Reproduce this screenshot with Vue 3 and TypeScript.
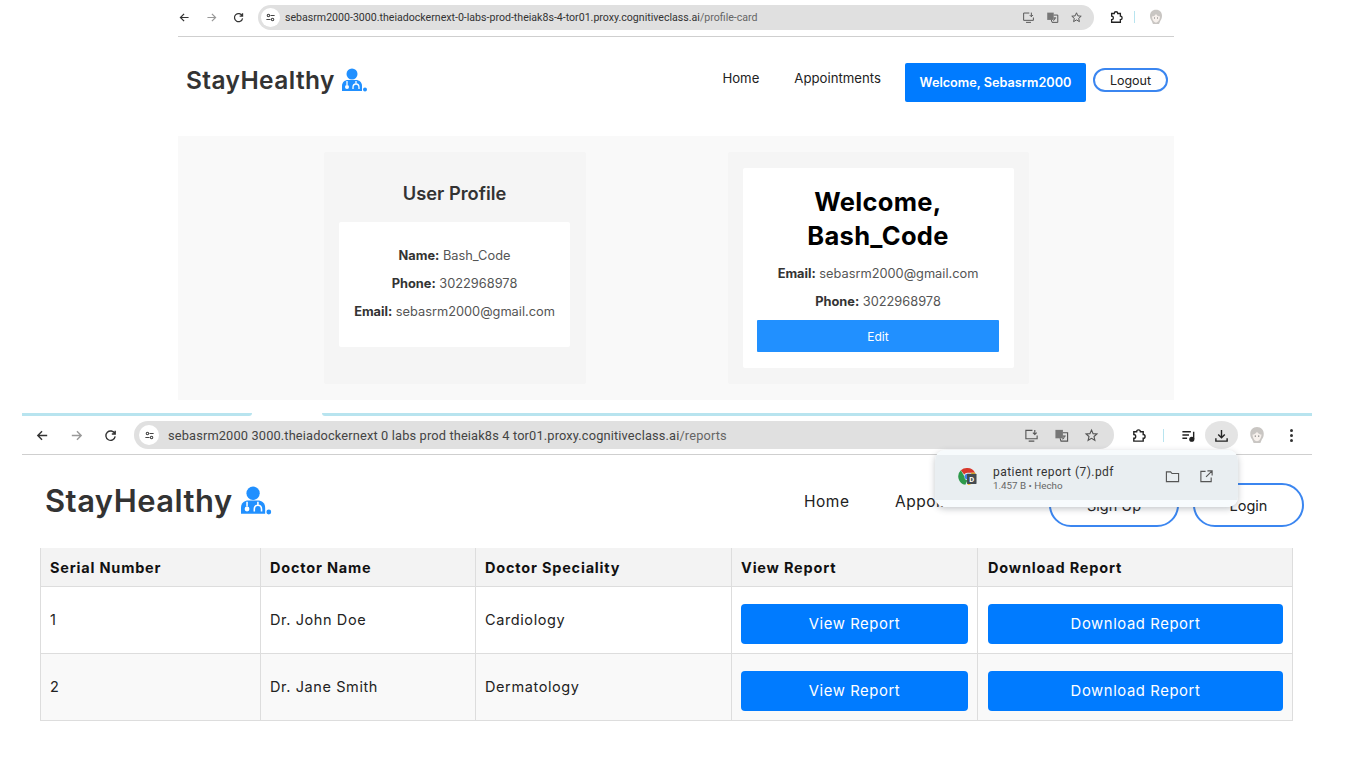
<script setup lang="ts">
const rows = [
  { id: 1, name: 'Dr. John Doe', spec: 'Cardiology' },
  { id: 2, name: 'Dr. Jane Smith', spec: 'Dermatology' },
]
const heads = ['Serial Number', 'Doctor Name', 'Doctor Speciality', 'View Report', 'Download Report']
</script>

<template>
  <div class="page">
    <section class="shot shot-top">
      <header class="chrome">
        <svg class="ic" viewBox="0 0 16 16"><path d="M13 8H3.500M7.500 3.500 3 8l4.500 4.500" /></svg>
        <svg class="ic off" viewBox="0 0 16 16"><path d="M3 8h9.500M8.500 3.500 13 8l-4.500 4.500" /></svg>
        <svg class="ic" viewBox="0 0 16 16"><path d="M12.600 6A5 5 0 1 0 13 9M13 2.800V6.400H9.400" /></svg>
        <div class="pill">
          <span class="tune">
            <svg viewBox="0 0 16 16"><circle cx="5" cy="5" r="1.800" /><path d="M8 5h6M2 11h6" /><circle cx="11" cy="11" r="1.800" /></svg>
          </span>
          <span class="url">sebasrm2000-3000.theiadockernext-0-labs-prod-theiak8s-4-tor01.proxy.cognitiveclass.ai<i>/profile-card</i></span>
          <svg class="ic sm" viewBox="0 0 16 16"><path d="M9 2.500H2v9h12V8M5 14h6M11.500 2v5M9.500 5l2 2 2-2" /></svg>
          <svg class="ic sm tr" viewBox="0 0 16 16"><rect x="1.500" y="2" width="8" height="9" fill="#777" stroke="none" /><path d="M9.500 5h5v9h-7l-1-3" /><path d="M9.500 8.500h3M11 8.500c0 2-1 3-2 3.500" /></svg>
          <svg class="ic sm" viewBox="0 0 16 16"><path d="M8 2.200 9.700 6l4.100.4-3.100 2.700.9 4L8 11l-3.600 2.100.9-4L2.200 6.400 6.300 6z" /></svg>
        </div>
        <svg class="ic puzzle" viewBox="0 0 16 16"><path d="M3 4h3a2 2 0 0 1 4 0h3v3a2 2 0 0 1 0 4v3H3v-3a2 2 0 0 0 0-4z" /></svg>
        <span class="sep"></span>
        <svg class="avatar" viewBox="0 0 16 16"><path d="M8 .8c3.800 0 6 2.600 6 6 0 2-.6 3.800-1.600 5L11 15H5l-1.400-3.200C2.600 10.600 2 8.800 2 6.800c0-3.400 2.200-6 6-6z" fill="#c9c6c3" /><path d="M4 7.500c1.500 0 3-.8 4-2.500 1 1.700 2.500 2.500 4 2.500-.2 3.500-2 6-4 6s-3.800-2.500-4-6z" fill="#f6f0ec" /><path d="M6 9h1M9 9h1" stroke="#777" stroke-width="1" /></svg>
      </header>

      <nav class="nav nav-top">
        <div class="logo">
          <span>StayHealthy</span>
          <svg class="doc" viewBox="0 0 26 24"><circle cx="11" cy="6" r="5.500" /><path d="M1 23v-5c0-4 3-6 6-6h8c3 0 6 2 6 6v5z" /><circle class="w" cx="6" cy="19" r="2" /><path class="wl" d="M6 17v-4M15 13v3c2 0 3 1.500 3 3.500v1.500M12 21v-1.500c0-2 1-3.500 3-3.500" /><circle cx="24" cy="21.500" r="2" /></svg>
        </div>
        <div class="links">
          <a>Home</a>
          <a>Appointments</a>
          <button class="welcome">Welcome, Sebasrm2000</button>
          <button class="logout">Logout</button>
        </div>
      </nav>

      <main class="profile">
        <div class="panel panel-left">
          <h2>User Profile</h2>
          <div class="inner">
            <p><b>Name:</b> Bash_Code</p>
            <p><b>Phone:</b> 3022968978</p>
            <p><b>Email:</b> sebasrm2000@gmail.com</p>
          </div>
        </div>
        <div class="panel panel-right">
          <div class="inner">
            <h1>Welcome,<br />Bash_Code</h1>
            <p><b>Email:</b> sebasrm2000@gmail.com</p>
            <p><b>Phone:</b> 3022968978</p>
            <button class="edit">Edit</button>
          </div>
        </div>
      </main>
    </section>

    <section class="shot shot-bottom">
      <div class="tabline"><span class="l"></span><span class="r"></span></div>
      <header class="chrome chrome2">
        <svg class="ic" viewBox="0 0 16 16"><path d="M13 8H3.500M7.500 3.500 3 8l4.500 4.500" /></svg>
        <svg class="ic off" viewBox="0 0 16 16"><path d="M3 8h9.500M8.500 3.500 13 8l-4.500 4.500" /></svg>
        <svg class="ic" viewBox="0 0 16 16"><path d="M12.600 6A5 5 0 1 0 13 9M13 2.800V6.400H9.400" /></svg>
        <div class="pill">
          <span class="tune">
            <svg viewBox="0 0 16 16"><circle cx="5" cy="5" r="1.800" /><path d="M8 5h6M2 11h6" /><circle cx="11" cy="11" r="1.800" /></svg>
          </span>
          <span class="url">sebasrm2000 3000.theiadockernext 0 labs prod theiak8s 4 tor01.proxy.cognitiveclass.ai<i>/reports</i></span>
          <svg class="ic sm" viewBox="0 0 16 16"><path d="M9 2.500H2v9h12V8M5 14h6M11.500 2v5M9.500 5l2 2 2-2" /></svg>
          <svg class="ic sm tr" viewBox="0 0 16 16"><rect x="1.500" y="2" width="8" height="9" fill="#777" stroke="none" /><path d="M9.500 5h5v9h-7l-1-3" /><path d="M9.500 8.500h3M11 8.500c0 2-1 3-2 3.500" /></svg>
          <svg class="ic sm" viewBox="0 0 16 16"><path d="M8 2.200 9.700 6l4.100.4-3.100 2.700.9 4L8 11l-3.600 2.100.9-4L2.200 6.400 6.300 6z" /></svg>
        </div>
        <svg class="ic puzzle" viewBox="0 0 16 16"><path d="M3 4h3a2 2 0 0 1 4 0h3v3a2 2 0 0 1 0 4v3H3v-3a2 2 0 0 0 0-4z" /></svg>
        <span class="sep"></span>
        <svg class="ic music" viewBox="0 0 16 16"><path d="M1.500 4h9M1.500 7.500h7M1.500 11h5M13.500 4v8" /><circle cx="11.500" cy="12" r="2" fill="#222" /></svg>
        <span class="dl">
          <svg class="ic" viewBox="0 0 16 16"><path d="M8 2v8M4.500 7 8 10.500 11.500 7M2 11v3h12v-3" /></svg>
        </span>
        <svg class="avatar" viewBox="0 0 16 16"><path d="M8 .8c3.800 0 6 2.600 6 6 0 2-.6 3.800-1.600 5L11 15H5l-1.400-3.200C2.600 10.600 2 8.800 2 6.800c0-3.400 2.200-6 6-6z" fill="#c9c6c3" /><path d="M4 7.500c1.500 0 3-.8 4-2.500 1 1.700 2.500 2.500 4 2.500-.2 3.500-2 6-4 6s-3.800-2.500-4-6z" fill="#f6f0ec" /><path d="M6 9h1M9 9h1" stroke="#777" stroke-width="1" /></svg>
        <span class="dots"><i></i><i></i><i></i></span>
      </header>

      <nav class="nav nav-bottom">
        <div class="logo">
          <span>StayHealthy</span>
          <svg class="doc" viewBox="0 0 26 24"><circle cx="11" cy="6" r="5.500" /><path d="M1 23v-5c0-4 3-6 6-6h8c3 0 6 2 6 6v5z" /><circle class="w" cx="6" cy="19" r="2" /><path class="wl" d="M6 17v-4M15 13v3c2 0 3 1.500 3 3.500v1.500M12 21v-1.500c0-2 1-3.500 3-3.500" /><circle cx="24" cy="21.500" r="2" /></svg>
        </div>
        <div class="links">
          <a class="home">Home</a>
          <a class="appt">Appointments</a>
          <button class="outline signup">Sign Up</button>
          <button class="outline login">Login</button>
        </div>
        <div class="popup">
          <svg class="pdf" viewBox="0 0 20 20">
            <path d="M10 1a9 9 0 0 1 8 5h-8a4 4 0 0 0-3.500 2L3 3.500A9 9 0 0 1 10 1z" fill="#d8382c" />
            <path d="M3 3.500 6.800 10a4 4 0 0 0 3.200 4l-2.300 4.800A9 9 0 0 1 3 3.500z" fill="#2d9a4b" />
            <path d="M18 6a9 9 0 0 1-8 13l3-6 1-7z" fill="#f4bd1d" />
            <circle cx="10" cy="10" r="3" fill="#3f80e8" />
            <rect x="9.500" y="7" width="10" height="11" rx="1" fill="#444b50" />
            <text x="14.500" y="15.500" class="pdf-d">D</text>
          </svg>
          <div class="pop-text">
            <div class="pop-name">patient report (7).pdf</div>
            <div class="pop-meta">1.457 B • Hecho</div>
          </div>
          <svg class="ic pop-ic" viewBox="0 0 16 16"><path d="M1.500 3h4.500l1.500 1.800h7v8.700h-13z" /></svg>
          <svg class="ic pop-ic" viewBox="0 0 16 16"><path d="M7 2.500H2v11h11V9M9 2h5v5M14 2 7.500 8.500" /></svg>
        </div>
      </nav>

      <table class="reports">
        <colgroup>
          <col class="c1" />
          <col class="c2" />
          <col class="c3" />
          <col class="c4" />
          <col />
        </colgroup>
        <thead>
          <tr><th v-for="h in heads" :key="h">{{ h }}</th></tr>
        </thead>
        <tbody>
          <tr v-for="r in rows" :key="r.id">
            <td>{{ r.id }}</td>
            <td>{{ r.name }}</td>
            <td>{{ r.spec }}</td>
            <td><button class="rbtn">View Report</button></td>
            <td><button class="rbtn">Download Report</button></td>
          </tr>
        </tbody>
      </table>
    </section>
  </div>
</template>

<style scoped>
.page {
  width: 1366px;
  height: 768px;
  overflow: hidden;
  background: #fff;
  font-family: Inter, "Liberation Sans", sans-serif;
  color: #222;
}
.shot-top { width: 996px; margin-left: 178px; }
.shot-bottom { width: 1290px; margin-left: 22px; margin-top: 13px; }

.chrome {
  height: 37px;
  padding-bottom: 2px;
  box-sizing: border-box;
  display: flex;
  align-items: center;
  border-bottom: 1px solid #cfcfcf;
}
.ic { width: 13px; height: 13px; fill: none; stroke: #333; stroke-width: 1.500; flex: none; margin-right: 14px; }
.ic.off { stroke: #999; }
.pill {
  flex: none;
  width: 836px;
  height: 25px;
  margin-left: -1px;
  margin-right: 15px;
  margin-top: 1px;
  border-radius: 13px;
  background: #e0e0e0;
  display: flex;
  align-items: center;
  box-sizing: border-box;
  padding-left: 3px;
}
.tune {
  width: 19px;
  height: 19px;
  border-radius: 50%;
  background: #fff;
  display: flex;
  align-items: center;
  justify-content: center;
  flex: none;
  margin-right: 5px;
}
.tune svg { width: 11px; height: 11px; fill: none; stroke: #444; stroke-width: 1.500; }
.url {
  flex: 1;
  font: 10.600px "Roboto", sans-serif;
  color: #333;
  white-space: nowrap;
  overflow: hidden;
}
.url i { font-style: normal; color: #666; }
.ic.sm { width: 13px; height: 13px; margin-right: 11px; stroke: #555; stroke-width: 1.200; }
.ic.puzzle { margin-right: 11px; stroke: #222; width: 14px; height: 14px; }
.sep { width: 1px; height: 12px; background: #b8e4ef; margin-right: 13px; flex: none; }
.avatar { width: 16px; height: 16px; flex: none; }

.nav { position: relative; display: flex; align-items: center; justify-content: space-between; }
.nav-top { height: 99px; padding: 0 6px 8px 8px; box-sizing: border-box; }
.logo { display: flex; align-items: center; font-weight: 600; color: #333; }
.nav-top .logo { font-size: 24.500px; letter-spacing: 0.400px; margin-top: -6px; }
.doc { width: 26px; height: 24px; margin-left: 6px; fill: #2190ff; }
.doc .w { fill: #fff; }
.doc .wl { fill: none; stroke: #fff; stroke-width: 1.300; }
.links { display: flex; align-items: center; }
.links a { font-size: 13.200px; color: #222; white-space: nowrap; }
.nav-top .links a:first-child { margin-right: 35px; margin-top: -9px; }
.nav-top .links a:nth-child(2) { margin-right: 24px; margin-top: -9px; }
.welcome {
  width: 181px;
  height: 39px;
  background: #007bff;
  color: #fff;
  border: 0;
  border-radius: 2px;
  font: 600 12.700px Inter, sans-serif;
  margin-right: 7px;
}
.logout {
  width: 75px;
  height: 24px;
  border: 2px solid #3b86f0;
  border-radius: 13px;
  background: #fff;
  font: 12.500px Inter, sans-serif;
  color: #222;
  padding: 0;
  margin-top: -5px;
}

.profile {
  height: 264px;
  background: #f9f9f9;
  box-sizing: border-box;
  padding-top: 16px;
  display: flex;
}
.panel { background: #f5f5f5; height: 232px; box-sizing: border-box; padding: 16px 15px; border-radius: 2px; }
.panel-left { width: 262px; margin-left: 146px; padding: 29px 16px 0 15px; }
.panel-right { width: 301px; margin-left: 142px; }
.panel h2 { margin: 0; font-size: 18.300px; line-height: 24px; font-weight: 600; color: #333; text-align: center; }
.inner { background: #fff; border-radius: 2px; text-align: center; box-sizing: border-box; }
.panel p { margin: 0; font-size: 12.800px; line-height: 28px; color: #555; white-space: nowrap; }
.panel b { font-weight: 700; color: #333; }
.panel-left .inner { margin-top: 17px; height: 125px; padding-top: 20px; }
.panel-right .inner { height: 200px; padding: 17px 15px 0 14px; }
.panel-right h1 { margin: 0 0 7px; font-size: 25.500px; line-height: 34px; font-weight: 700; color: #000; letter-spacing: 0.300px; }
.panel-right p { color: #555; }
.edit {
  width: 100%;
  height: 32px;
  border: 0;
  border-radius: 1px;
  background: #2190ff;
  color: #fff;
  font: 12px Inter, sans-serif;
  margin-top: 4px;
}

.tabline { display: flex; height: 3px; }
.tabline .l { width: 230px; background: #b8e4ef; border-bottom-right-radius: 3px; }
.tabline .r { width: 990px; margin-left: 70px; flex: 1; background: #b8e4ef; border-bottom-left-radius: 3px; }
.chrome2 { height: 39px; padding-left: 13px; padding-bottom: 0; }
.chrome2 > .ic { width: 15px; height: 15px; margin-right: 19px; }
.chrome2 .pill { width: 980px; height: 28px; border-radius: 14px; margin-left: -3px; margin-right: 17px; margin-top: 0; padding-left: 5px; }
.chrome2 .tune { width: 20px; height: 20px; margin-right: 9px; }
.chrome2 .url { font-size: 12.800px; color: #444; letter-spacing: 0.150px; }
.chrome2 .ic.sm { width: 15px; height: 15px; margin-right: 15px; }
.chrome2 .ic.puzzle { width: 15px; height: 15px; margin-right: 17px; }
.chrome2 .sep { height: 13px; margin-right: 17px; }
.chrome2 .ic.music { margin-right: 9px; stroke: #222; }
.dl {
  width: 33px; height: 28px; border-radius: 50%;
  background: #e4e4e4;
  display: flex; align-items: center; justify-content: center;
  margin-right: 10px;
  flex: none;
}
.dl .ic { width: 15px; height: 15px; margin: 0; stroke: #222; }
.chrome2 .avatar { width: 18px; height: 18px; margin-right: 24px; }
.dots { display: flex; flex-direction: column; gap: 2px; }
.dots i { width: 3px; height: 3px; border-radius: 50%; background: #333; }

.nav-bottom { height: 93px; padding-left: 23px; }
.nav-bottom .logo { font-size: 30.900px; letter-spacing: 0.500px; margin-top: -2px; }
.nav-bottom .doc { width: 33px; height: 29px; margin-left: 6px; }
.nav-bottom .links { position: absolute; left: 782px; top: 28px; }
.nav-bottom .links a { font-size: 15.500px; letter-spacing: 0.500px; }
.home { width: 91px; margin-top: -8px; }
.appt { width: 154px; margin-top: -8px; }
.outline {
  height: 44px;
  border: 2px solid #3b86f0;
  border-radius: 24px;
  background: #fff;
  font: 14.500px Inter, sans-serif;
  color: #222;
  padding: 0;
  flex: none;
}
.signup { width: 130px; margin-right: 14px; }
.login { width: 111px; }

.popup {
  position: absolute;
  left: 913px;
  top: -5px;
  width: 303px;
  height: 57px;
  box-sizing: border-box;
  display: flex;
  align-items: center;
  padding: 0 24px 0 23px;
  background: linear-gradient(#f7fbfd 0 5px, #e9eef1 5px 50px, #f7fbfd 50px);
  border-radius: 10px;
  box-shadow: 0 2px 6px rgba(60, 70, 80, 0.3);
  z-index: 2;
}
.pdf { width: 19px; height: 19px; flex: none; margin: 0 16px 5px 0; }
.pdf-d { font: 700 8px Roboto, sans-serif; fill: #fff; text-anchor: middle; }
.pop-text { flex: 1; }
.pop-name { font: 12px/14px Roboto, sans-serif; color: #333; letter-spacing: 0.450px; white-space: nowrap; }
.pop-meta { font: 9.800px/12px Roboto, sans-serif; color: #666; margin-top: 1px; white-space: nowrap; }
.ic.pop-ic { width: 15px; height: 15px; margin: 0 0 5px 19px; stroke: #555; stroke-width: 1.200; }

.reports {
  margin-left: 18px;
  width: 1253px;
  border-collapse: collapse;
  table-layout: fixed;
  color: #222;
}
.c1 { width: 220px; }
.c2 { width: 215px; }
.c3 { width: 256px; }
.c4 { width: 246px; }
.reports th, .reports td {
  border: 1px solid #ddd;
  padding: 0 9px;
  text-align: left;
  font-size: 14.500px;
  letter-spacing: 0.600px;
  white-space: nowrap;
}
.reports th:last-child, .reports td:last-child { padding-left: 10px; }
.reports th { height: 38px; box-sizing: border-box; background: #f3f3f3; font-weight: 700; color: #111; letter-spacing: 0.800px; border-top: 0; padding-top: 1px; }
.reports td { height: 67px; box-sizing: border-box; }
.reports tbody tr:nth-child(2) { background: #f9f9f9; }
.rbtn {
  width: 100%;
  height: 40px;
  margin-top: 8px;
  display: block;
  background: #007bff;
  color: #fff;
  border: 0;
  border-radius: 4px;
  font: 14.800px Inter, sans-serif;
  letter-spacing: 0.600px;
}
</style>
